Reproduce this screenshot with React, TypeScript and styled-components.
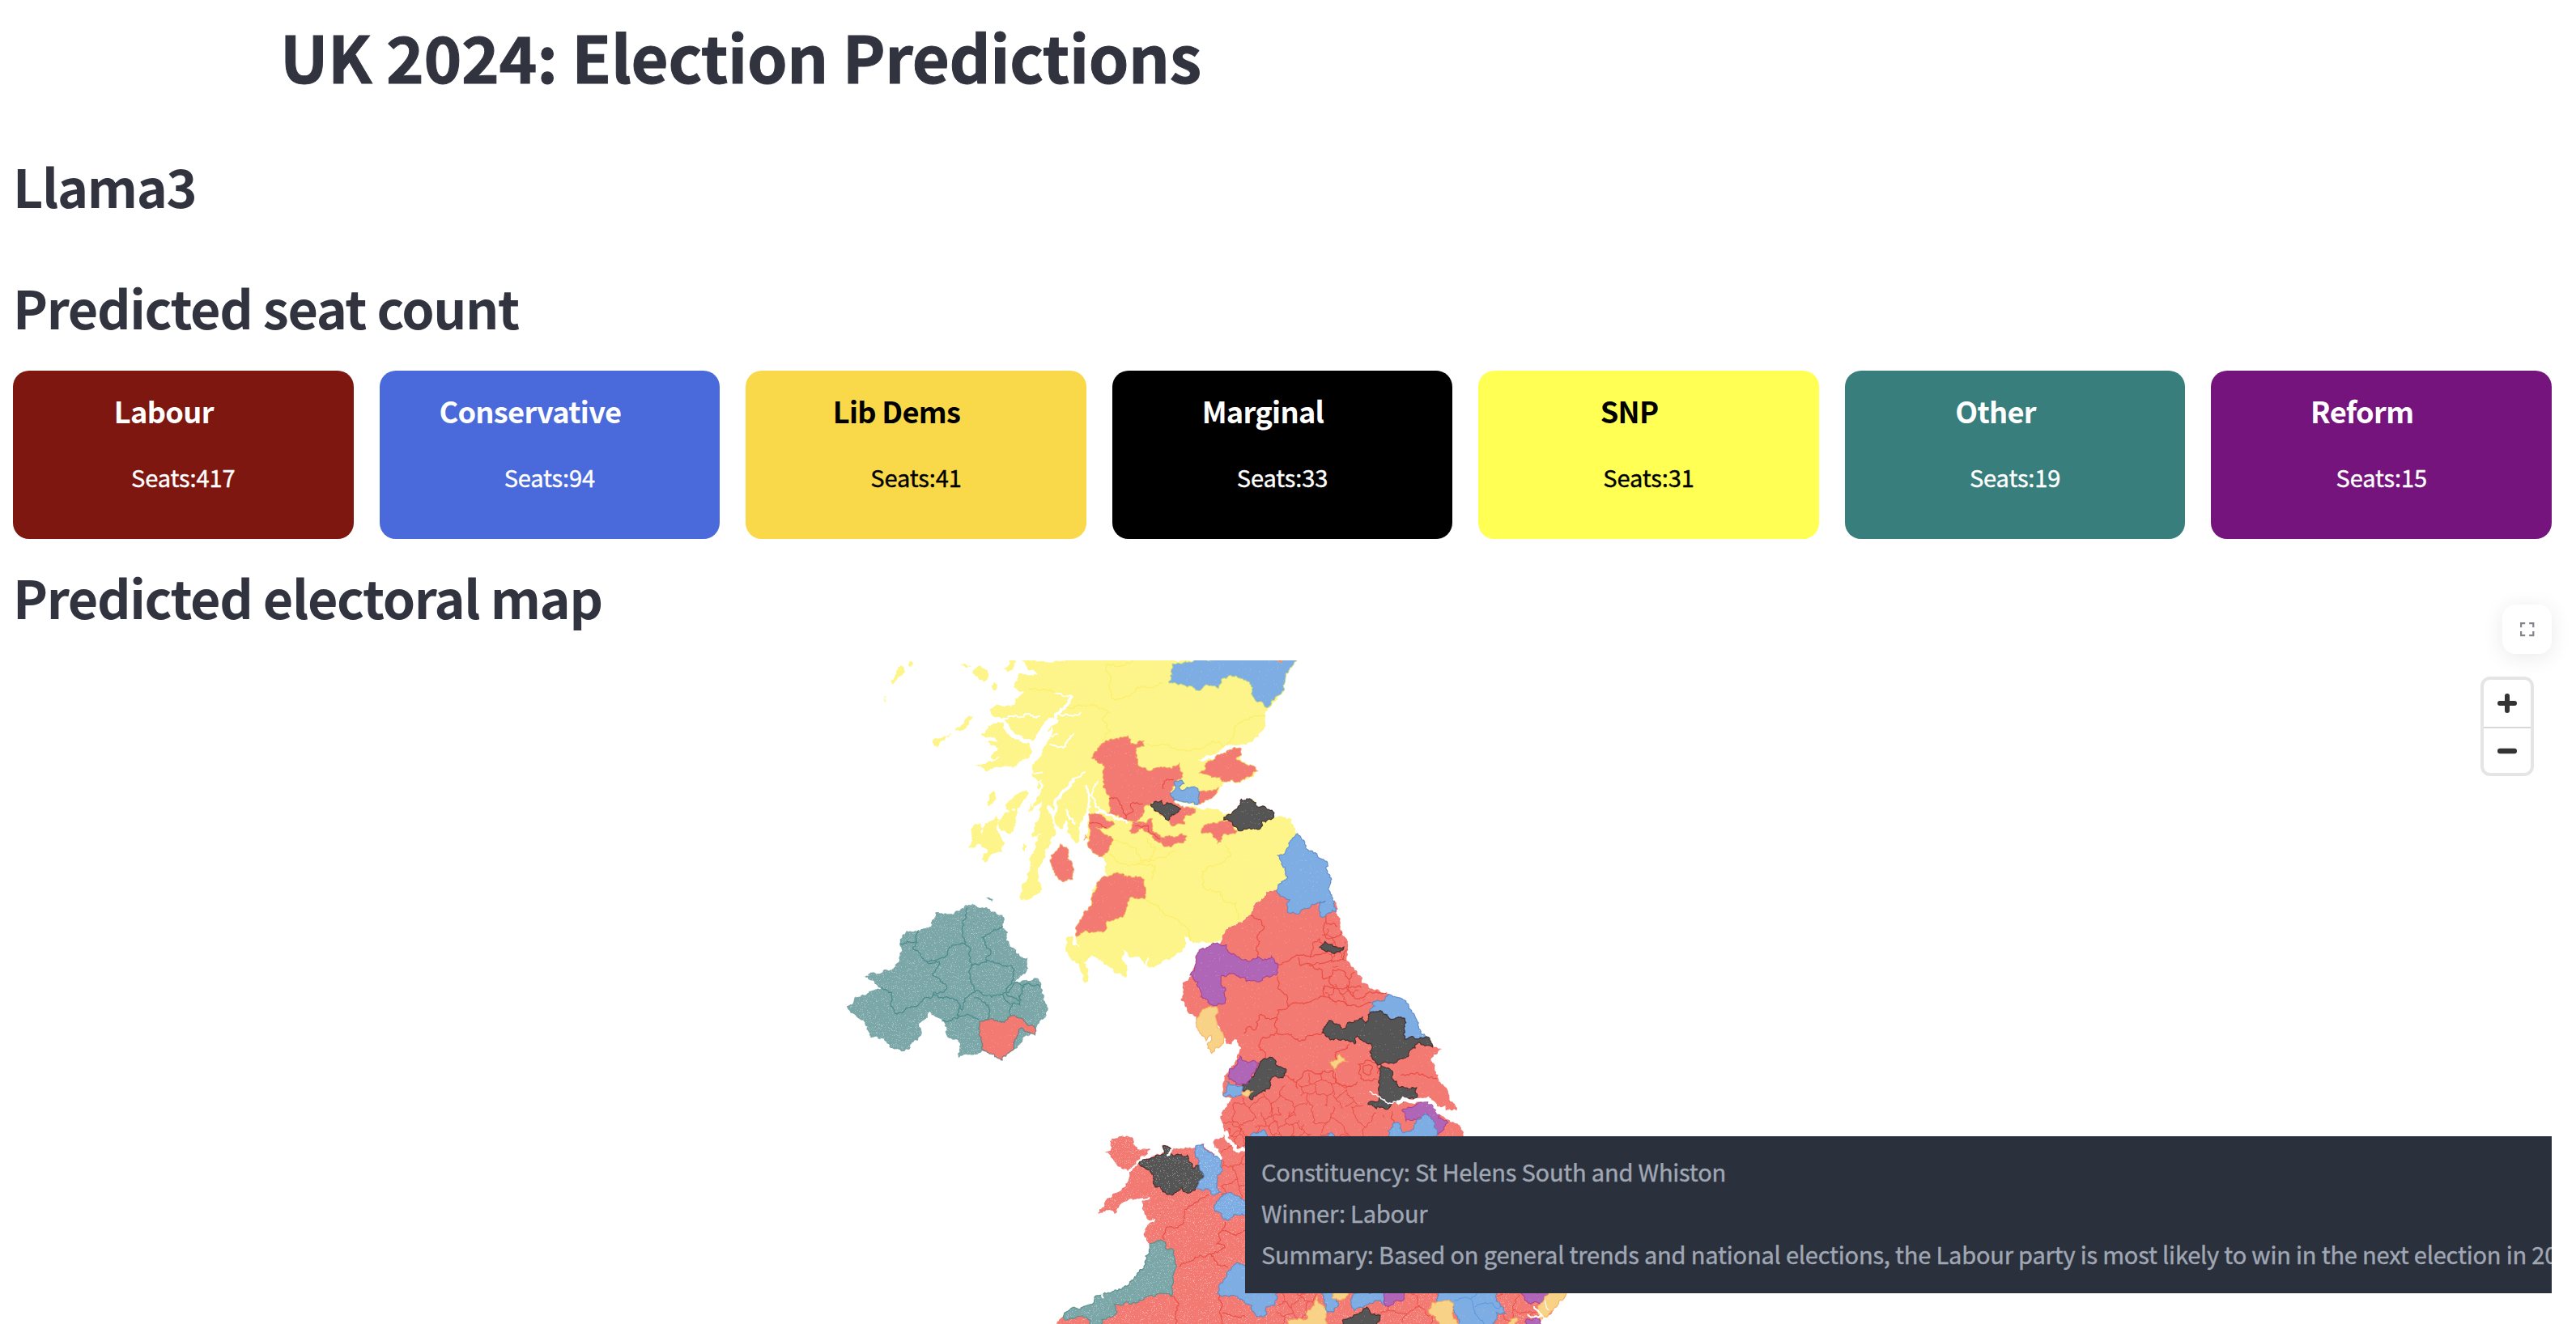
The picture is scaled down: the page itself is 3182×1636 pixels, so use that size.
import React from "react";
import styled, { createGlobalStyle } from "styled-components";

const GlobalStyle = createGlobalStyle`
  html, body { margin: 0; padding: 0; background: #ffffff; }
  body { overflow: hidden; font-family: "Noto Sans CJK SC", "Noto Sans", sans-serif; }
`;

const Page = styled.main`
  box-sizing: border-box;
  width: 100%;
  height: 1636px;
  padding: 0 30px 0 16px;
  overflow: hidden;
  display: flex;
  flex-direction: column;
  color: #31333f;
`;

const Title = styled.h1`
  margin: 0 0 46px;
  padding-left: 330px;
  font-size: 79.4px;
  line-height: 137px;
  font-weight: 700;
  letter-spacing: -0.3px;
  -webkit-text-stroke: 1px currentColor;
  white-space: nowrap;
`;

const Heading = styled.h2<{ $after: number }>`
  margin: 0 0 ${(p) => p.$after}px;
  font-size: 64.6px;
  line-height: 92px;
  font-weight: 600;
  letter-spacing: -1.35px;
  white-space: nowrap;
`;

const Cards = styled.section`
  display: grid;
  grid-template-columns: repeat(7, 1fr);
  column-gap: 32px;
  height: 208px;
  margin-bottom: 25px;
`;

const Card = styled.article<{ $bg: string; $fg: string }>`
  display: flex;
  flex-direction: column;
  align-items: center;
  padding-top: 23px;
  border-radius: 20px;
  background: ${(p) => p.$bg};
  color: ${(p) => p.$fg};
`;

const Party = styled.h3`
  margin: 0 0 31px;
  padding-right: 48px;
  font-size: 36.2px;
  line-height: 52px;
  font-weight: 600;
  letter-spacing: -0.7px;
`;

const Seats = styled.p`
  margin: 0;
  font-size: 29px;
  line-height: 50px;
  letter-spacing: -0.1px;
  -webkit-text-stroke: 0.4px currentColor;
`;

const MapFrame = styled.section`
  position: relative;
  flex: none;
  height: 820px;
`;

const MapCanvas = styled.svg`
  display: block;
  width: 3136px;
  height: 820px;
`;

const FullscreenButton = styled.button`
  position: absolute;
  top: -69px;
  right: 0;
  width: 61px;
  height: 61px;
  padding: 0;
  border: 0;
  border-radius: 16px;
  background: #fff;
  box-shadow: 0 4px 24px rgba(49, 51, 63, 0.1);
  display: flex;
  align-items: center;
  justify-content: center;
`;

const ZoomControl = styled.div`
  position: absolute;
  top: 20px;
  right: 22px;
  width: 58px;
  border: 4px solid #e5e5e5;
  border-radius: 12px;
  background: #fff;
`;

const ZoomButton = styled.button<{ $height: number }>`
  box-sizing: border-box;
  display: flex;
  align-items: center;
  justify-content: center;
  width: 58px;
  height: ${(p) => p.$height}px;
  padding: 0;
  border: 0;
  background: none;
  & + & { border-top: 2px solid #d8d8d8; }
`;

const Tooltip = styled.div`
  position: absolute;
  left: 1522px;
  right: 0;
  top: 588px;
  height: 194px;
  box-sizing: border-box;
  padding: 18px 0 0 20px;
  overflow: hidden;
  background: #2b313c;
  color: #a0a7b4;
  font-size: 29px;
  line-height: 51px;
  letter-spacing: -0.18px;
  -webkit-text-stroke: 0.4px currentColor;
  white-space: nowrap;
`;

const parties = [
  { name: "Labour", seats: 417, bg: "#7e170f", fg: "#fff" },
  { name: "Conservative", seats: 94, bg: "#4a69da", fg: "#fff" },
  { name: "Lib Dems", seats: 41, bg: "#f9d84a", fg: "#000" },
  { name: "Marginal", seats: 33, bg: "#000", fg: "#fff" },
  { name: "SNP", seats: 31, bg: "#ffff54", fg: "#000" },
  { name: "Other", seats: 19, bg: "#377e7d", fg: "#fff" },
  { name: "Reform", seats: 15, bg: "#75147c", fg: "#fff" },
];

/* ---- Map geometry: every sheet has its own origin, three units per pixel ---- */

type Pt = [number, number];
type Sheet = "scot" | "north" | "tyne" | "eng" | "wales" | "south";

const sheets: Record<Sheet, Pt> = {
  scot: [1020, 800],
  north: [1280, 800],
  tyne: [1500, 980],
  eng: [1400, 1180],
  wales: [1280, 1380],
  south: [1500, 1590],
};

const ink = {
  yellow: ["#fef58a", "#fbee6a"],
  red: ["#f27a72", "#ea4a42"],
  teal: ["#7ba7a8", "#4a8a8a"],
  blue: ["#7eade3", "#5284c8"],
  black: ["#555555", "#3a2020"],
  purple: ["#b066b6", "#a03a90"],
  tan: ["#f8d387", "#f2a956"],
  white: ["#ffffff", "#ffffff"],
};
type Ink = keyof typeof ink;

const parse = (s: string, sheet: Sheet): Pt[] =>
  s.trim().split(/\s+/).map((p) => {
    const [x, y] = p.split(",").map(Number);
    return [sheets[sheet][0] + x / 3, sheets[sheet][1] + y / 3];
  });

const hash = (x: number, y: number) => {
  const v = Math.sin(x * 12.9898 + y * 78.233) * 43758.5453;
  return (v - Math.floor(v)) * 2 - 1;
};

// Splits an edge into a ragged line; both directions give the same points.
const split = (a: Pt, b: Pt, out: Pt[]) => {
  const dx = b[0] - a[0];
  const dy = b[1] - a[1];
  const len = Math.hypot(dx, dy);
  if (len < 2.6) {
    out.push(b);
    return;
  }
  const mx = (a[0] + b[0]) / 2;
  const my = (a[1] + b[1]) / 2;
  const sign = dx > 0 || (dx === 0 && dy > 0) ? 1 : -1;
  const d = hash(Math.round(mx * 8), Math.round(my * 8)) * Math.min(len * 0.28, 2.4) * sign;
  const m: Pt = [mx - (dy / len) * d, my + (dx / len) * d];
  split(a, m, out);
  split(m, b, out);
};

const ragged = (pts: Pt[], closed: boolean) => {
  const out: Pt[] = [pts[0]];
  const n = closed ? pts.length : pts.length - 1;
  for (let i = 0; i < n; i++) split(pts[i], pts[(i + 1) % pts.length], out);
  return "M" + out.map((p) => p[0].toFixed(1) + " " + p[1].toFixed(1)).join("L") + (closed ? "Z" : "");
};

// A jittered honeycomb, for the small urban constituencies.
const mesh = (sheet: Sheet, x0: number, y0: number, x1: number, y1: number, cell: number) => {
  const [ox, oy] = sheets[sheet];
  const w = cell * 0.62;
  const h = cell * 1.05;
  const at = (i: number, j: number): Pt => {
    const lift = (i + j) % 2 === 0 ? h * 0.16 : -h * 0.16;
    const x = x0 + i * w + hash(i * 7 + x0, j * 13 + y0) * w * 0.5;
    const y = y0 + j * h + lift + hash(j * 17 + y0 + 7, i * 5 + x0) * h * 0.3;
    return [ox + x / 3, oy + y / 3];
  };
  const cols = Math.ceil((x1 - x0) / w);
  const rows = Math.ceil((y1 - y0) / h);
  let d = "";
  for (let j = 0; j <= rows; j++)
    for (let i = 0; i <= cols; i++) {
      if (i < cols && hash(i * 3 + 1, j * 9 + cell) < 0.82) d += ragged([at(i, j), at(i + 1, j)], false);
      if (j < rows && (i + j) % 2 === 0) d += ragged([at(i, j), at(i, j + 1)], false);
    }
  return d;
};

type Area = [Ink, Sheet, string];
type Line = [string, number, Sheet, string];

const britain = "315,-35 330,-60 340,-85 390,-122 435,-150 450,-190 490,-235 530,-240 560,-285 600,-440 608,-450 640,-405 680,-375 720,-340 732,-270 730,-230 745,-200 752,-160 755,-150 775,-80 795,-50 795,0 815,45 845,80 848,105 890,128 945,145 1015,180 1050,240 1065,290 1110,335 1143,350 1112,370 1108,400 1130,460 1200,570 1198,602 1185,576 1150,600 1215,640 1222,672 1240,900 1600,1200 1600,1255 1595,1275 1560,1300 1535,1335 1510,1350 1500,1400 -300,1400 -285,1368 -260,1340 -220,1305 -160,1295 -120,1260 -60,1245 0,1205 40,1160 60,1075 55,1068 40,1030 65,985 40,950 35,900 -20,910 -60,940 -70,960 -90,945 -132,958 -100,905 -50,875 -20,840 -15,805 20,770 115,730 108,705 140,725 225,715 260,700 290,730 325,760 295,695 335,665 345,675 320,605 345,550 365,530 332,520 335,450 345,440 355,425 375,405 385,370 400,345 385,315 365,330 345,330 330,300 310,250 290,200 232,242 175,165 190,100 215,70 230,35 240,-10 290,-40";

const base: Area[] = [
  ["yellow", "scot", "725,48 760,85 795,100 760,103 715,95 700,150 735,165 700,190 700,212 640,212 608,235 620,255 665,262 668,290 685,325 720,338 765,350 810,325 845,290 820,350 800,400 780,420 762,470 785,500 790,530 760,580 750,610 770,600 800,570 795,610 762,690 765,705 800,690 775,730 755,790 745,865 725,885 722,935 760,930 795,910 798,885 785,865 800,800 815,760 830,715 852,695 840,650 820,600 822,585 848,610 855,660 880,670 890,640 905,690 935,725 942,660 965,600 975,620 970,735 1020,775 1040,800 1042,850 1000,880 985,920 980,960 945,1010 925,1070 940,1112 922,1105 915,1070 893,1075 890,1110 905,1150 940,1175 950,1210 960,1245 973,1240 970,1210 955,1165 985,1140 1020,1160 1065,1200 1110,1225 1117,1185 1100,1160 1100,1120 1125,1150 1160,1145 1190,1180 1220,1182 1260,1155 1325,1130 1330,1070 1350,1088 1455,1088 1470,1080 1480,1055 1530,1018 1575,990 1590,950 1630,905 1670,900 1712,850 1685,790 1673,770 1700,765 1720,720 1748,690 1725,635 1660,628 1640,600 1595,590 1580,565 1540,562 1520,600 1475,620 1440,600 1380,597 1310,585 1245,530 1310,570 1378,583 1440,550 1460,520 1490,495 1535,500 1600,458 1535,415 1540,375 1470,395 1400,422 1380,415 1470,375 1560,360 1610,315 1630,280 1640,225 1700,155 1705,95 1738,48"],
  ["yellow", "scot", "600,290 640,275 660,290 680,325 740,345 762,375 755,400 710,438 650,445 590,457 552,435 600,425 650,402 612,412 640,372 610,362 590,350 640,348 575,322"],
  ["yellow", "scot", "545,90 575,70 600,85 602,110 585,128 565,115"],
  ["yellow", "scot", "660,80 680,48 705,48 695,75 670,85"],
  ["yellow", "scot", "612,142 625,128 636,140 630,160"],
  ["yellow", "scot", "240,125 262,85 285,70 290,95 262,120 248,145"],
  ["yellow", "scot", "308,60 318,50 325,60 312,75"],
  ["yellow", "scot", "500,70 520,62 540,70 520,76"],
  ["yellow", "scot", "216,180 226,182 222,205"],
  ["yellow", "scot", "480,308 520,265 545,255 530,285 500,310"],
  ["yellow", "scot", "400,340 430,335 470,322 440,345 415,372 402,365"],
  ["yellow", "scot", "625,528 628,550 605,590 597,575 605,545"],
  ["yellow", "scot", "745,525 752,540 715,595 668,600 690,560"],
  ["yellow", "scot", "665,610 712,600 705,640 678,690 650,680 643,640"],
  ["yellow", "scot", "632,625 638,680 660,720 655,760 610,770 590,797 577,785 600,755 575,730 545,745 527,742 545,665 575,650 578,690 605,645"],
  ["yellow", "scot", "735,725 745,735 738,758 730,750"],
  ["red", "eng", britain],
  ["red", "wales", "280,80 320,70 355,75 375,120 425,120 395,145 340,202 310,185 275,150 247,125 275,125"],
  ["teal", "scot", "405,985 470,990 535,955 600,968 660,1000 655,1040 675,1055 670,1085 720,1145 748,1150 750,1190 700,1240 790,1230 805,1270 820,1325 810,1375 778,1415 690,1495 585,1495 565,1505 490,1520 490,1455 445,1430 430,1380 385,1350 345,1395 352,1440 320,1465 310,1490 240,1485 215,1450 165,1445 155,1405 78,1330 120,1295 205,1265 145,1220 165,1205 245,1195 275,1140 275,1095 300,1050 350,1048 390,1035"],
  ["teal", "scot", "590,930 605,926 620,935 615,945 605,935"],
];

const lines: Line[] = [
  ["yellow", 1.2, "scot", "1045,60 1090,70 1140,50"],
  ["yellow", 1.2, "scot", "1045,60 1055,130 1070,195 1150,150 1210,150 1250,130"],
  ["yellow", 1.2, "scot", "750,155 850,168 "],
  ["yellow", 1.2, "scot", "885,228 990,210 1050,240 1025,270 1055,310 1025,350"],
  ["yellow", 1.2, "scot", "1190,358 1240,358 1350,385 1400,375 1435,345 1480,365"],
  ["yellow", 1.2, "scot", "1480,360 1510,335 1520,290 1570,265 1630,255"],
  ["yellow", 1.2, "scot", "1180,930 1300,1005 1330,1030 1350,1085"],
  ["yellow", 1.2, "scot", "1480,730 1500,775 1440,810 1395,830 1410,900 1460,905 1490,945 1520,945 1530,1010"],
  ["yellow", 1.2, "scot", "1050,770 1100,800 1150,805 1220,810 1210,860"],
  ["yellow", 1.2, "scot", "1060,720 1150,745 1165,790 1200,795 1225,745 1190,705"],
  ["yellow", 1.2, "scot", "1150,805 1230,780 1295,755"],
  ["teal", 1.2, "scot", "525,965 505,1040 515,1100 465,1110 440,1150 375,1165 325,1120 345,1048"],
  ["teal", 1.2, "scot", "275,1098 335,1088"],
  ["teal", 1.2, "scot", "515,1100 530,1110 540,1170 535,1215 555,1275 515,1300 505,1345 495,1330"],
  ["teal", 1.2, "scot", "655,1035 580,1075 610,1120 595,1165 690,1180 695,1215 655,1285 685,1325"],
  ["teal", 1.2, "scot", "655,1285 600,1290 555,1275"],
  ["teal", 1.2, "scot", "540,1180 595,1165"],
  ["teal", 1.2, "scot", "375,1165 420,1165 395,1210 445,1250 435,1280 400,1278 395,1295 255,1355 240,1320 245,1280 205,1262"],
  ["teal", 1.2, "scot", "400,1290 470,1300 500,1330 490,1375 430,1385"],
  ["teal", 1.2, "scot", "490,1360 570,1380"],
  ["teal", 1.2, "scot", "550,1300 605,1335 600,1380"],
  ["teal", 1.2, "scot", "695,1250 735,1250 795,1260"],
  ["teal", 1.2, "scot", "695,1250 670,1285 715,1310 735,1255"],
  ["teal", 1.2, "scot", "685,1365 690,1320 720,1325 715,1290"],
  ["red", 1.1, "tyne", "135,455 185,495 160,540 165,615"],
  ["red", 1.1, "tyne", "235,632 270,625 320,600 360,605 420,590 390,540 365,555 355,610"],
  ["red", 1.1, "tyne", "310,610 320,640 400,630 480,610 490,580"],
  ["red", 1.1, "tyne", "350,638 400,660 405,690 430,685"],
  ["red", 1.1, "tyne", "235,680 235,720 272,760 275,790 350,775 405,755 450,775 520,785 580,775"],
  ["red", 1.1, "tyne", "275,790 235,805 232,890"],
  ["red", 1.1, "tyne", "110,890 130,865 155,875 165,825 232,835"],
  ["red", 1.1, "tyne", "232,890 285,895 315,920 405,885"],
  ["red", 1.1, "tyne", "232,890 185,905 165,940 190,980"],
  ["red", 1.1, "tyne", "425,690 440,655 480,660 500,690 490,720 440,720 425,690"],
  ["red", 1.1, "tyne", "405,755 405,720 440,720"],
  ["red", 1.1, "tyne", "500,690 520,665"],
  ["red", 1.1, "tyne", "490,710 545,720"],
  ["red", 1.1, "tyne", "490,720 520,760 600,735 640,740"],
  ["red", 1.1, "tyne", "415,455 405,500 420,540 460,530 475,515"],
  ["red", 1.1, "tyne", "415,485 455,495"],
  ["red", 1.1, "eng", "605,475 635,430 680,440 740,430 750,470 790,490 830,470"],
  ["red", 1.1, "eng", "560,430 605,475 610,495"],
  ["red", 1.1, "eng", "745,425 750,360 800,330"],
  ["red", 1.1, "eng", "835,440 835,405 870,390 900,400 905,440"],
  ["red", 1.1, "eng", "850,435 855,410 885,412 880,440 850,435"],
  ["red", 1.1, "eng", "990,445 1050,435 1125,460"],
  ["red", 1.1, "eng", "835,440 860,465 905,460"],
  ["red", 1.1, "eng", "960,580 965,630"],
  ["red", 1.1, "wales", "475,455 480,415 545,395 550,345 600,315 640,290"],
  ["red", 1.1, "wales", "530,555 600,520 700,485 670,470 700,390"],
  ["red", 1.1, "wales", "645,510 665,535 710,558"],
  ["red", 1.1, "wales", "500,665 528,700 515,768"],
  ["red", 1.1, "wales", "680,660 690,768"],
  ["red", 1.1, "wales", "690,730 775,740"],
  ["red", 1.1, "wales", "690,420 740,440 775,420"],
];

const meshes: [Sheet, number, number, number, number, number, string][] = [
  ["eng", 320, 480, 1000, 700, 62, "335,560 440,520 520,490 560,480 640,560 860,560 930,600 940,680 700,680 640,600 460,590 430,680 350,672 320,605"],
  ["eng", 420, 560, 720, 700, 34, "460,590 520,560 600,590 650,640 660,680 430,680"],
  ["eng", 600, 430, 880, 640, 42, "610,480 640,440 740,430 790,495 860,560 640,560"],
  ["eng", 340, 610, 440, 720, 30, "340,620 400,620 430,720 370,710"],
  ["eng", 300, 660, 460, 920, 56, "310,680 345,690 414,730 414,900 325,890 325,760"],
  ["tyne", 390, 440, 560, 790, 40, "400,500 460,490 480,540 490,640 440,650 400,560"],
  ["tyne", 400, 690, 620, 800, 40, "405,710 520,710 560,770 470,790 405,760"],
  ["south", 200, 10, 480, 150, 48, "230,24 380,24 370,138 230,138"],
  ["south", 560, 10, 850, 150, 74, "600,24 830,24 830,138 600,138"],
  ["south", 1030, 10, 1250, 150, 80, "1050,24 1200,24 1200,138 1030,138"],
];

const overrides: Area[] = [
  ["blue", "north", "505,60 560,55 610,40 965,35 925,95 920,155 860,222 815,200 800,160 780,125 740,105 690,115 675,152 630,138 590,158 550,140 492,132 503,100"],
  ["red", "north", "895,48 912,48 905,56"],
  ["red", "north", "340,328 350,355 400,345 400,365 380,370 370,410 380,440 420,458 450,445 500,450 530,430 542,480 515,495 497,540 515,578 590,600 585,615 550,625 550,655 500,660 490,640 430,575 400,590 395,620 375,640 330,645 305,620 265,615 270,560 248,520 245,430 205,410 215,390 270,345"],
  ["red", "north", "760,375 735,370 690,395 635,425 625,455 605,465 650,482 685,478 688,497 725,490 755,500 790,480 820,458 800,438 755,420 740,412 760,400"],
  ["red", "north", "600,535 640,530 675,520 660,550 630,565 600,583"],
  ["blue", "north", "515,495 540,492 548,505 530,515 535,528 560,518 600,525 602,545 597,583 560,572 530,570 510,568 497,540 512,530"],
  ["black", "north", "425,580 465,568 470,585 500,578 537,600 490,642 455,610"],
  ["red", "north", "345,680 360,645 410,650 430,635 430,680 465,705 540,690 558,700 545,725 500,740 470,735 430,695 390,670 365,690"],
  ["red", "north", "195,615 240,620 290,655 270,668 225,665 250,690 285,710 270,750 240,775 192,738 200,690"],
  ["red", "north", "180,695 188,705 176,715"],
  ["red", "north", "615,670 680,645 720,645 745,680 700,690 672,725 655,695 615,690"],
  ["black", "north", "695,630 740,600 760,562 800,565 820,590 850,592 880,620 850,648 835,645 830,672 790,668 750,680 720,645 695,640"],
  ["red", "north", "90,728 115,745 125,790 140,825 135,860 105,867 70,845 55,800 55,770"],
  ["red", "north", "260,850 320,838 400,860 405,890 400,932 345,930 320,1000 260,1015 255,1050 180,1050 150,1072 150,1050 170,1000 200,960 210,910 225,880"],
  ["blue", "north", "968,690 1000,735 1040,765 1080,800 1092,870 1090,910 1105,940 1112,978 1065,1000 1048,975 1050,945 1072,940 1000,968 965,988 937,985 940,935 890,902 932,850 905,790 893,770 920,765 940,720"],
  ["purple", "eng", "240,-10 290,-40 345,-38 355,-10 420,20 460,8 480,20 512,5 535,35 530,75 490,80 460,100 420,98 355,68 325,80 325,110 343,125 343,165 305,190 250,155 240,100 210,75 230,35"],
  ["tan", "eng", "235,235 265,200 300,192 315,210 310,260 330,290 330,330 290,365 275,345 290,300 270,318 240,280"],
  ["black", "tyne", "390,572 410,550 440,568 480,570 445,595 410,585"],
  ["blue", "eng", "945,145 1015,180 1050,240 1065,290 1087,303 1040,308 1005,312 1003,270 1010,250 990,230 960,238 925,215 877,212 895,190 880,175 930,170"],
  ["black", "eng", "725,242 775,275 790,260 850,228 862,252 877,212 925,215 960,238 990,230 1010,250 1003,270 1005,312 1040,308 1087,303 1108,342 1055,325 1045,345 990,385 970,400 925,400 905,408 880,375 885,345 830,300 820,330 775,312 730,315 702,275"],
  ["black", "eng", "915,405 960,430 960,460 980,485 1050,492 1040,535 975,540 935,572 870,555 880,542 910,540 908,470"],
  ["tan", "eng", "765,368 798,395 765,400 745,425 727,398 755,390"],
  ["black", "eng", "470,395 520,385 530,410 567,425 555,455 510,460 505,495 440,537 400,490 430,470 455,430"],
  ["purple", "eng", "395,375 410,392 465,400 450,435 420,480 380,480 350,450 355,425 380,410"],
  ["blue", "eng", "348,470 400,485 405,515 370,528 332,520 345,500"],
  ["tan", "eng", "402,508 445,505 430,520 405,518"],
  ["blue", "eng", "435,665 485,648 497,680 435,680"],
  ["blue", "eng", "700,672 730,660 755,680 700,680"],
  ["purple", "eng", "995,575 1090,540 1135,590 1130,605 1165,622 1130,665 1110,640 1090,590 1050,610 1010,615"],
  ["blue", "eng", "940,680 960,630 990,628 995,655 1040,640 1050,610 1085,590 1110,610 1115,640 1125,680"],
  ["black", "wales", "380,172 475,130 468,108 500,122 498,138 560,142 580,190 605,180 622,220 590,270 550,278 540,262 485,288 460,258 438,255 435,225 410,195"],
  ["blue", "wales", "590,108 620,102 655,140 685,165 690,200 670,215 670,265 685,280 650,288 638,268 592,265 622,220 605,180 590,150"],
  ["blue", "wales", "680,300 710,282 750,295 785,310 785,365 740,362 710,385 662,350"],
  ["blue", "eng", "345,1180 385,1140 424,1150 560,1240 527,1255 525,1300 490,1310 485,1340 460,1340 440,1300 400,1275 310,1255 330,1215"],
  ["teal", "wales", "455,460 480,465 485,495 505,490 520,550 505,590 500,665 455,655 400,672 370,692 290,695 300,725 240,750 240,780 200,780 200,755 160,740 105,752 100,740 140,705 200,695 240,660 300,645 360,605 400,560 420,475"],
  ["tan", "south", "380,35 395,65 425,80 415,110 425,150 270,150 270,125 345,120 340,100 370,70"],
  ["blue", "south", "385,15 455,15 460,65 440,95 420,95 415,70"],
  ["tan", "south", "435,40 450,15 500,15 470,50"],
  ["blue", "south", "515,15 625,15 640,65 600,50 560,70 520,90 508,45"],
  ["purple", "south", "628,15 705,15 700,50 635,72"],
  ["black", "south", "475,125 540,95 565,75 580,100 615,105 610,130 590,150 480,150"],
  ["blue", "south", "822,15 1040,15 1080,100 1045,95 1035,150 905,150 885,70 825,60"],
  ["tan", "south", "805,60 830,55 880,58 900,150 835,150 820,110 795,95"],
  ["purple", "south", "1125,15 1245,15 1210,60 1150,50"],
  ["tan", "south", "1245,15 1303,15 1290,50 1215,120 1200,80 1210,60"],
  ["purple", "south", "1155,120 1200,115 1210,150 1150,150"],
  ["tan", "south", "1100,120 1125,118 1110,150 1090,150"],
  ["red", "scot", "570,1388 620,1378 650,1390 685,1365 735,1385 778,1415 775,1437 715,1415 700,1455 690,1495 655,1530 585,1495 570,1440"],
];

const inner: Line[] = [
  ["#5798dc", 1, "south", "890,50 950,45 975,24"],
  ["#5798dc", 1, "south", "950,45 965,100 1000,138"],
  ["#5798dc", 1, "south", "965,75 1020,60 1060,75"],
  ["red", 1.1, "scot", "1050,560 1080,560 1110,620 1140,605 1130,580 1175,580"],
  ["red", 1.1, "scot", "1110,620 1115,650"],
  ["red", 1.1, "scot", "975,650 1000,650 1040,670"],
  ["red", 1.1, "scot", "1250,525 1255,495 1290,490"],
  ["red", 1.1, "scot", "1145,662 1195,660 1205,690 1240,710"],
];

const water: Line[] = [
  ["white", 3.5, "scot", "915,180 885,225 850,265"],
  ["white", 9, "scot", "850,265 800,320 760,375"],
  ["white", 5, "scot", "665,285 690,325 750,352"],
  ["white", 1.5, "scot", "850,170 915,180"],
  ["white", 1.8, "scot", "865,250 900,252 945,240"],
  ["white", 1.8, "scot", "655,264 720,258 740,246 795,254"],
  ["white", 1.8, "scot", "830,360 880,372 920,320"],
  ["white", 1.6, "scot", "780,360 820,328 860,322"],
  ["white", 3.6, "scot", "845,610 860,560 900,520 920,485"],
  ["white", 1.8, "scot", "920,485 962,462"],
  ["white", 2.5, "scot", "970,620 975,560 965,510"],
  ["white", 1.6, "scot", "975,550 1008,495"],
  ["white", 2, "scot", "985,550 1000,590 1035,610"],
  ["white", 2.6, "scot", "1000,612 1060,622 1118,652"],
  ["white", 2.4, "scot", "890,600 900,625 925,655"],
  ["white", 2.4, "scot", "765,590 790,545 795,500"],
  ["white", 1.6, "scot", "770,470 805,465"],
  ["white", 1.4, "scot", "760,505 800,492"],
  ["white", 2, "scot", "1190,1175 1195,1150"],
  ["white", 4.5, "eng", "975,545 1000,533 1040,545 1092,533 1130,572"],
  ["white", 8, "eng", "1125,570 1160,592 1200,590"],
  ["white", 4, "eng", "340,655 352,690 375,720 414,722"],
  ["white", 3, "eng", "300,715 325,758"],
  ["white", 1.4, "eng", "875,505 910,525 935,545 975,545"],
  ["white", 2.5, "wales", "500,120 485,145"],
  ["white", 2, "wales", "392,306 420,298"],
  ["white", 2, "wales", "412,392 440,380"],
  ["white", 2, "south", "1160,103 1215,108 1185,72"],
  ["white", 1.2, "south", "1225,50 1240,85"],
  ["white", 2, "wales", "245,655 250,672"],
];

const Shape = ({ area }: { area: Area }) => {
  const [tone, sheet, pts] = area;
  const d = ragged(parse(pts, sheet), true);
  const coarse = tone === "teal" || (tone !== "yellow" && sheet === "wales");
  return (
    <>
      <path d={d} fill={ink[tone][0]} />
      <path d={d} fill={coarse ? "url(#grain)" : "url(#fine)"} />
    </>
  );
};

const Stroke = ({ line }: { line: Line }) => {
  const [tone, width, sheet, pts] = line;
  const color = tone in ink ? ink[tone as Ink][1] : tone;
  return <path d={ragged(parse(pts, sheet), false)} fill="none" stroke={color} strokeWidth={width} />;
};

const dots = (count: number, size: number, seed: number) =>
  Array.from({ length: count }, (_, i) => {
    const x = Math.floor(((hash(i + seed, 3) + 1) / 2) * size);
    const y = Math.floor(((hash(i + seed, 11) + 1) / 2) * size);
    return <rect key={i} x={x} y={y} width="1" height="1" />;
  });

const edgeColor = (a: Area) => {
  if (a[0] === "red") return a[2].startsWith("570,1388") ? "#5b7777" : "#f4a05c";
  if (a[0] === "blue" && a[2].startsWith("505,60")) return "#c0d878";
  return ink[a[0]][1];
};

const ElectoralMap = () => (
  <MapCanvas viewBox="16 816 3136 820" role="img">
    <defs>
      <pattern id="grain" width="72" height="72" patternUnits="userSpaceOnUse">
        <g fill="#fff" opacity="0.27">{dots(560, 72, 1)}</g>
      </pattern>
      <pattern id="fine" width="72" height="72" patternUnits="userSpaceOnUse">
        <g fill="#fff" opacity="0.2">{dots(80, 72, 40)}</g>
      </pattern>
      <linearGradient id="fadeSouth" x1="0" y1="1380" x2="0" y2="1500" gradientUnits="userSpaceOnUse">
        <stop offset="0" stopColor="#000" />
        <stop offset="1" stopColor="#fff" />
      </linearGradient>
      <mask id="southOnly" maskUnits="userSpaceOnUse" x="1100" y="1300" width="900" height="400">
        <rect x="1100" y="1300" width="900" height="400" fill="url(#fadeSouth)" />
      </mask>
      <clipPath id="land">
        <path d={ragged(parse(britain, "eng"), true)} />
      </clipPath>
      {meshes.map((m, i) => (
        <clipPath id={"dense" + i} key={i}>
          <path d={ragged(parse(m[6], m[0]), true)} />
        </clipPath>
      ))}
    </defs>
    {base.map((a, i) => (a[0] === "yellow" ? null : <Shape key={i} area={a} />))}
    {base.map((a, i) => (a[0] === "yellow" ? <Shape key={i} area={a} /> : null))}
    <path d={ragged(parse(britain, "eng"), true)} fill="url(#grain)" mask="url(#southOnly)" />
    <g clipPath="url(#land)">
      {meshes.map((m, i) => (
        <g key={i} clipPath={`url(#dense${i})`}>
          <path d={mesh(m[0], m[1], m[2], m[3], m[4], m[5])} fill="none" stroke="#ea4a42" strokeWidth="1" />
        </g>
      ))}
    </g>
    {lines.map((l, i) => <Stroke key={i} line={l} />)}
    {overrides.map((a, i) => (
      <g key={i}>
        <Shape area={a} />
        <path d={ragged(parse(a[2], a[1]), true)} fill="none" stroke={edgeColor(a)} strokeWidth="1.1" opacity="0.8" />
      </g>
    ))}
    {inner.map((l, i) => <Stroke key={i} line={l} />)}
    {water.map((l, i) => <Stroke key={i} line={l} />)}
  </MapCanvas>
);

export default function App() {
  return (
    <>
      <GlobalStyle />
      <Page>
        <Title>UK 2024: Election Predictions</Title>
        <Heading $after={58}>Llama3</Heading>
        <Heading $after={33}>Predicted seat count</Heading>
        <Cards>
          {parties.map((p) => (
            <Card key={p.name} $bg={p.bg} $fg={p.fg}>
              <Party>{p.name}</Party>
              <Seats>Seats:{p.seats}</Seats>
            </Card>
          ))}
        </Cards>
        <Heading $after={33}>Predicted electoral map</Heading>
        <MapFrame>
          <ElectoralMap />
          <FullscreenButton aria-label="Fullscreen">
            <svg width="18" height="18" viewBox="0 0 18 18" fill="none" stroke="#85868d" strokeWidth="2.2">
              <path d="M1.1 6.2V1.1H6.2M11.2 1.1H16.3V6.2M16.3 11V16.2H11.2M6.2 16.2H1.1V11" />
            </svg>
          </FullscreenButton>
          <ZoomControl>
            <ZoomButton $height={58} aria-label="Zoom in">
              <svg width="24" height="24" viewBox="0 0 24 24" stroke="#333" strokeWidth="6" strokeLinecap="round">
                <path d="M3 12H21M12 3V21" />
              </svg>
            </ZoomButton>
            <ZoomButton $height={57} aria-label="Zoom out">
              <svg width="24" height="24" viewBox="0 0 24 24" stroke="#333" strokeWidth="6.4" strokeLinecap="round">
                <path d="M3.2 12H20.8" />
              </svg>
            </ZoomButton>
          </ZoomControl>
          <Tooltip>
            <div>Constituency: St Helens South and Whiston</div>
            <div>Winner: Labour</div>
            <div>Summary: Based on general trends and national elections, the Labour party is most likely to win in the next election in 20</div>
          </Tooltip>
        </MapFrame>
      </Page>
    </>
  );
}
